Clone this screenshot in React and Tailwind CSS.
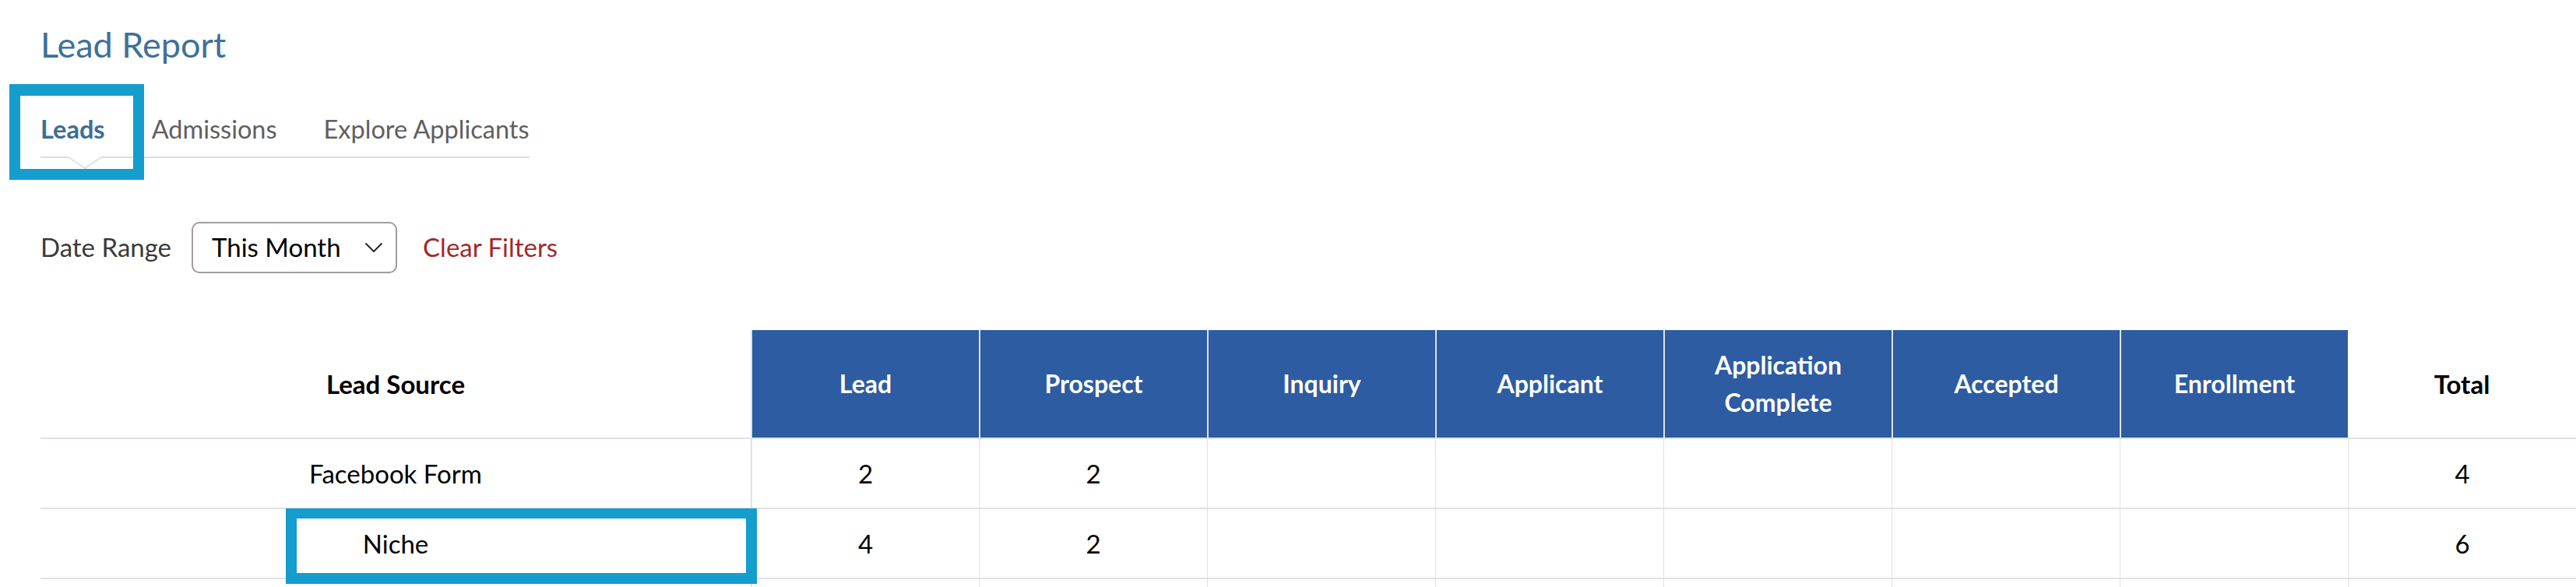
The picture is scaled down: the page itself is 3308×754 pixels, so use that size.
import { ChevronDown } from "lucide-react";

const columns = [
  "Lead",
  "Prospect",
  "Inquiry",
  "Applicant",
  "Application Complete",
  "Accepted",
  "Enrollment",
];

const rows = [
  { source: "Facebook Form", values: [2, 2, "", "", "", "", ""], total: 4 },
  { source: "Niche", values: [4, 2, "", "", "", "", ""], total: 6, marked: true },
  { source: "", values: ["", "", "", "", "", "", ""], total: "" },
];

function Callout({ className }) {
  return (
    <div
      className={`pointer-events-none absolute border-[14px] border-[#159dcd] ${className}`}
    />
  );
}

function Tabs() {
  const tabs = ["Leads", "Admissions", "Explore Applicants"];
  return (
    <div className="mt-[62px] inline-flex gap-[60px] border-b-2 border-[#dddddd]">
      {tabs.map((tab, i) => (
        <div
          key={tab}
          className={`relative pb-[16px] text-[32.5px] leading-[39px] ${
            i === 0 ? "font-bold text-[#3b6f97]" : "text-[#5f5f5f]"
          }`}
        >
          {tab}
          {i === 0 && (
            <>
              <svg
                className="absolute left-[36px] top-full z-10"
                width="42"
                height="17"
                viewBox="0 0 42 17"
              >
                <polygon points="0,0 42,0 21,15" fill="#ffffff" />
                <path d="M0 1 L21 15 L42 1" fill="none" stroke="#e2e2e2" strokeWidth="2" />
              </svg>
              <Callout className="left-[-40px] top-[-38px] h-[123px] w-[173px] border-t-[15px]" />
            </>
          )}
        </div>
      ))}
    </div>
  );
}

function Filters() {
  return (
    <div className="mt-[82px] flex items-center text-[33px]">
      <span className="text-[#3a3a3a]">Date Range</span>
      <div className="ml-[26px] flex h-[66px] w-[264px] items-center justify-between rounded-[10px] border-2 border-[#a29c9e] pl-[24px] pr-[8px] text-black">
        <span>This Month</span>
        <ChevronDown size={40} strokeWidth={1.1} className="text-[#222]" />
      </div>
      <span className="ml-[33px] text-[#a4282b]">Clear Filters</span>
    </div>
  );
}

function ReportTable() {
  return (
    <div className="mt-[73px] grid grid-cols-[912px_repeat(8,minmax(0,1fr))] text-[33px] leading-[48px]">
      {/* header */}
      <div className="flex h-[140px] items-center justify-center border-b-2 border-[#dfe2e8] font-bold text-black">
        Lead Source
      </div>
      {columns.map((col) => (
        <div
          key={col}
          className="flex h-[140px] items-center justify-center border-b-2 border-l-2 border-[#dfe2e8] bg-[#2d5ca2] px-4 text-center text-[32px] font-bold text-white"
        >
          {col}
        </div>
      ))}
      <div className="flex h-[140px] items-center justify-center border-b-2 border-[#dfe2e8] font-bold text-black">
        Total
      </div>

      {/* body */}
      {rows.map((row, r) => (
        <div key={r} className="contents">
          <div className="relative flex h-[90px] items-center justify-center border-b-2 border-[#dfe2e8] text-black">
            {row.source}
            {row.marked && (
              <Callout className="left-[315px] top-[-1px] h-[97px] w-[605px] border-t-[13px]" />
            )}
          </div>
          {row.values.map((v, i) => (
            <div
              key={i}
              className={`flex h-[90px] items-center justify-center border-b-2 border-[#dfe2e8] text-black ${
                i === 0 ? "border-l-2" : "border-l"
              }`}
            >
              {v}
            </div>
          ))}
          <div className="flex h-[90px] items-center justify-center border-b-2 border-l border-[#dfe2e8] text-black">
            {row.total}
          </div>
        </div>
      ))}
    </div>
  );
}

export default function App() {
  return (
    <main className="h-[754px] w-[3308px] overflow-hidden bg-white font-['Lato','Liberation_Sans',sans-serif]">
      <div className="pl-[52px] pt-[30px]">
        <h1 className="text-[45px] leading-[54px] font-normal text-[#3d7199]">
          Lead Report
        </h1>
        <Tabs />
        <Filters />
        <ReportTable />
      </div>
    </main>
  );
}
